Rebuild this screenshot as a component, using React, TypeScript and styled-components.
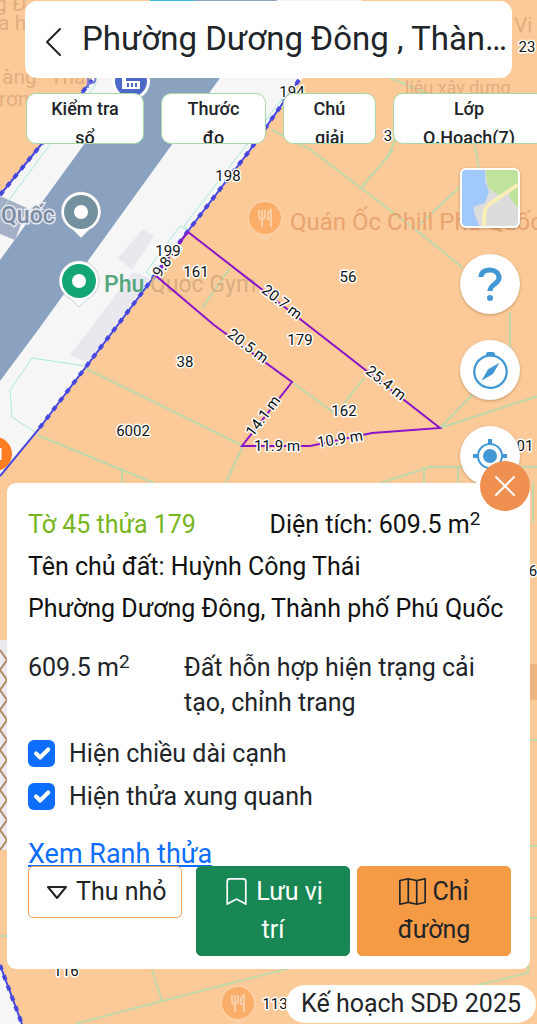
import React from "react";
import styled, { createGlobalStyle } from "styled-components";
import { BsBookmark, BsCompass, BsMap } from "react-icons/bs";

const GlobalStyle = createGlobalStyle`
  *, *::before, *::after { box-sizing: border-box; }
  body {
    margin: 0;
    background: #fcca98;
    color: #212529;
    font-family: Roboto, "Noto Sans", sans-serif;
    font-size: 25px;
  }
  button { font-family: inherit; color: inherit; cursor: pointer; }
`;

const Screen = styled.main`
  position: relative;
  display: flex;
  flex-direction: column;
  min-height: 100vh;
  overflow: hidden;
`;

const MapCanvas = styled.svg`
  position: absolute;
  inset: 0;
  width: 100%;
  height: 100%;
  z-index: -1;
`;

const Header = styled.header`
  display: flex;
  align-items: center;
  gap: 20px;
  height: 77px;
  margin: 1px 25px 15px;
  padding: 0 2px 0 20px;
  border-radius: 12px;
  background: #fff;
`;

const BackButton = styled.button`
  display: flex;
  flex: none;
  padding: 4px 0 0;
  border: 0;
  background: none;
`;

const Title = styled.h1`
  flex: 1;
  min-width: 0;
  margin: 0 0 2px;
  overflow: hidden;
  font-size: 33px;
  font-weight: 400;
  line-height: 48px;
  text-overflow: ellipsis;
  white-space: nowrap;
`;

const Toolbar = styled.nav`
  display: flex;
  gap: 17px;
  padding-left: 26px;
  overflow: hidden;
`;

const ToolButton = styled.button<{ $width: number }>`
  display: flex;
  flex: none;
  align-items: flex-start;
  justify-content: center;
  width: ${(p) => p.$width}px;
  height: 51px;
  padding: 0 20px;
  overflow: hidden;
  border: 1px solid #a6d9a5;
  border-radius: 10px;
  background: #fff;
  font-size: 18px;
  font-weight: 500;
  line-height: 29px;
  text-align: center;
`;

const Controls = styled.div`
  display: flex;
  flex: 1;
  flex-direction: column;
  align-items: flex-end;
  gap: 26px;
  padding: 24px 17px 0 0;
`;

const RoundButton = styled.button`
  display: flex;
  align-items: center;
  justify-content: center;
  width: 60px;
  height: 60px;
  padding: 0;
  border: 0;
  border-radius: 50%;
  background: #fff;
  box-shadow: 0 1px 3px rgba(90, 60, 20, 0.35);
  color: #4298d4;
`;

const LayerButton = styled(RoundButton)`
  overflow: hidden;
  border: 2px solid #fff;
  border-radius: 6px;
`;

const Sheet = styled.section`
  position: relative;
  margin: -4px 7px 16px;
  padding: 21px 19px 13px 21px;
  border-radius: 9px;
  background: #fff;
`;

const CloseButton = styled.button`
  position: absolute;
  top: -22px;
  right: 0;
  display: flex;
  align-items: center;
  justify-content: center;
  width: 50px;
  height: 50px;
  padding: 0;
  border: 0;
  border-radius: 50%;
  background: #f09050;
`;

const Line = styled.p`
  display: flex;
  margin: 0;
  color: #111;
  line-height: 42px;
  white-space: nowrap;
`;

const ParcelName = styled.strong`
  flex: 0 0 50%;
  color: #76b51b;
  font-weight: 400;
`;

const Sup = styled.sup`
  font-size: 19px;
  line-height: 0;
  vertical-align: 8px;
`;

const LandUse = styled.dl`
  display: flex;
  margin: 20px 0 12px;
  line-height: 35px;
`;

const LandArea = styled.dt`
  flex: 0 0 156px;
`;

const LandKind = styled.dd`
  margin: 0;
`;

const Option = styled.label`
  display: flex;
  align-items: center;
  gap: 14px;
  line-height: 43px;
`;

const Tick = styled.input`
  appearance: none;
  width: 27px;
  height: 27px;
  margin: 0;
  border-radius: 6px;
  &:checked {
    background: #0d6efd
      url("data:image/svg+xml,%3Csvg xmlns='http://www.w3.org/2000/svg' viewBox='0 0 20 20'%3E%3Cpath fill='none' stroke='%23fff' stroke-linecap='round' stroke-linejoin='round' stroke-width='3' d='m6 10 3 3 6-6'/%3E%3C/svg%3E");
  }
`;

const BoundaryLink = styled.a`
  display: block;
  width: fit-content;
  margin-top: 24px;
  color: #0d6efd;
  font-size: 27px;
  line-height: 24px;
`;

const Actions = styled.div`
  position: relative;
  display: flex;
  align-items: flex-start;
  gap: 7px;
`;

const ActionButton = styled.button<{ $fill: string; $line: string; $ink: string }>`
  flex: 1;
  padding: 6px 14px;
  border: 1px solid ${(p) => p.$line};
  border-radius: 5px;
  background: ${(p) => p.$fill};
  color: ${(p) => p.$ink};
  font-size: 25px;
  line-height: 38px;
  svg { vertical-align: -5px; }
`;

const CollapseButton = styled(ActionButton)`
  margin-right: 7px;
  padding: 6px 12px 6px 16px;
  white-space: nowrap;
  svg {
    margin-right: 3px;
    vertical-align: 0;
  }
`;

const PlanButton = styled.button`
  align-self: flex-end;
  margin-right: 1px;
  margin-bottom: 1px;
  padding: 0 15px;
  border: 0;
  border-radius: 19px;
  background: #fff;
  font-size: 25px;
  line-height: 38px;
`;

type Label = { x: number; y: number; text: string; turn?: number };

const parcels: Label[] = [
  { x: 292, y: 97, text: "194" },
  { x: 228, y: 181, text: "198" },
  { x: 196, y: 277, text: "161" },
  { x: 348, y: 282, text: "56" },
  { x: 300, y: 345, text: "179" },
  { x: 185, y: 367, text: "38" },
  { x: 344, y: 416, text: "162" },
  { x: 133, y: 436, text: "6002" },
  { x: 527, y: 52, text: "23" },
  { x: 388, y: 141, text: "3" },
  { x: 525, y: 451, text: "01" },
  { x: 533, y: 576, text: "6" },
  { x: 66, y: 976, text: "116" },
  { x: 275, y: 1009, text: "113" },
];

const edges: Label[] = [
  { x: 167, y: 260, text: "9.8 m", turn: -54 },
  { x: 282, y: 302, text: "20.7 m", turn: 38 },
  { x: 248, y: 346, text: "20.5 m", turn: 37 },
  { x: 386, y: 383, text: "25.4 m", turn: 38 },
  { x: 263, y: 416, text: "14.1 m", turn: -53 },
  { x: 277, y: 446, text: "11.9 m" },
  { x: 340, y: 439, text: "10.9 m", turn: -9 },
];

function ParcelMap() {
  return (
    <MapCanvas viewBox="0 0 537 1024" preserveAspectRatio="xMidYMid slice" aria-label="Bản đồ thửa đất">
      <rect width="537" height="1024" fill="#fcca98" />
      <path d="M0 195 36 151 98 70 150 0H362L300 82 250 150 188 231 120 322 38 430 0 476Z" fill="#f6f6f7" />
      <path d="M0 260 80 150 132 78 189 0H277L220 78 168 150 38 330 0 381Z" fill="#8aa1c0" />
      <path d="M0 196 27 208 15 240 0 234Z" fill="#a5b0c6" />
      <path d="m143 229 11 7-22 34-14-12Z" fill="#e9e8ef" />
      <path d="m133 272 17 6-62 85-18-8Z" fill="#e9e8ef" />
      <path d="M0 965 22 1024H0Z" fill="#f6f6f7" />
      <path d="M150 0h44v2h-44Z" fill="#3cb6e4" />
      <g fill="none" stroke="#a9e8dc" strokeWidth="1">
        <path d="m46 150 50-66M0 212l46-62M292 86l-108 140 4 4-8-4-34 46 14 10M85 366 32 358 10 390 12 417 38 434" />
      </g>
      <g fill="none" stroke="#b2dcae" strokeWidth="2" opacity=".8">
        <path d="M85 368 243 446 226 482M37 435l117 48M122 468v15M272 130l39 20 50 38 50 38 52 42M393 150l-32 38M418 226l45-42M390 78l147 60M440 428l98-32M440 428l35-36M292 382l44 32 28-36M202 308l28-40M510 312v36M380 483l50-16h107M424 467v16M458 467v16M386 160l12-26M475 145l4 24" />
        <path d="m0 695 7 2M0 936H7M152 970l10 31L75 1024M162 1001 290 968M478 985 528 973V955M530 740h7M530 846h7M530 918h7M533 483v40" />
      </g>
      <g fill="none" stroke="#4547df">
        <path d="M0 195 36 151 92 80M299 80 250 150 188 231 156 274 120 322 38 430 0 476M0 965 22 1024" strokeWidth="2" />
        <path d="M0 195 36 151 92 80M299 80 250 150 188 231 156 274 120 322 38 430M0 965 22 1024" strokeWidth="4" strokeDasharray="5 6" />
      </g>
      <path d="M0 640h7v210H0Z" fill="#e9e9ee" />
      <path d="m0 650 7 10-7 10 7 10-7 10 7 10-7 10 7 10-7 10 7 10-7 10 7 10-7 10 7 10-7 10 7 10-7 10 7 10-7 10 7 10-7 10" fill="none" stroke="#b08a66" strokeWidth="2" />
      <path d="M530 664h7v36h-7Z" fill="#efb580" />
      <g>
        <g fill="#e2ad80" fontSize="21">
          <text x="-5" y="11">g Đ</text>
          <text x="-2" y="30">a hà</text>
          <text x="2" y="84">àng</text>
          <text x="50" y="84">Thá<tspan fill="#7480d2">p</tspan></text>
          <text x="-1" y="106">rơng</text>
          <text x="514" y="32">Vi</text>
          <text x="405" y="94" fontSize="18">liệu xây dựng</text>
          <text x="290" y="230" fontSize="24" fill="#e9a470">Quán Ốc Chill Phú Quốc</text>
        </g>
        <text x="1" y="223" fontSize="23" fontWeight="500" fill="#7c8ba1" stroke="#e3e7ef" strokeWidth="3" paintOrder="stroke">Quốc</text>
        <text x="104" y="292" fontSize="23" fontWeight="500" fill="#55a67d">Phu <tspan fontWeight="400" fill="#d8ae80">Quoc Gym</tspan></text>
      </g>
      <circle cx="131" cy="81" r="19" fill="#fff" />
      <circle cx="131" cy="81" r="16" fill="#4d69c8" />
      <path d="M122 76h4v5h14v8h-18Z" fill="#fff" />
      <path d="M128 83v4m4-4v4m4-4v4" stroke="#4d69c8" strokeWidth="2" />
      {[{ x: 81, y: 212, c: "#73909f" }, { x: 79, y: 281, c: "#13a674" }].map((pin) => (
        <g key={pin.y} transform={`translate(${pin.x} ${pin.y})`}>
          <path d="M0 26-8 18A20 20 0 1 1 8 18Z" fill="#fff" stroke="#9aa4b4" strokeOpacity=".5" />
          <circle r="17" fill={pin.c} />
          <circle r="7" fill="#fff" />
        </g>
      ))}
      {[{ x: 265, y: 218 }, { x: 238, y: 1003 }].map((spot) => (
        <g key={spot.y} transform={`translate(${spot.x} ${spot.y})`}>
          <path d="M0 24-8 16A18 18 0 1 1 8 16Z" fill="#fccfa4" />
          <circle r="16" fill="#fbae69" />
          <path d="M-6-8v6q0 3 3 3t3-3v-6M-3-8V9M6 9V-8q-4 2-3 9h3" fill="none" stroke="#fbd0a8" strokeWidth="2" />
        </g>
      ))}
      <circle cx="-5" cy="454" r="17" fill="#ff7d22" />
      <path d="M0 448v12" stroke="#fff" strokeWidth="3" />
      <path d="M188 232 440 428 372 433 310 446H242L292 382 214 325 155 275Z" fill="none" stroke="#8b15c9" strokeWidth="2" />
      <g fill="#111" stroke="#fff" strokeWidth="3" strokeLinejoin="round" paintOrder="stroke" fontSize="15" textAnchor="middle">
        {edges.map((l) => (
          <text key={l.text} transform={`translate(${l.x} ${l.y}) rotate(${l.turn ?? 0})`} y="5">{l.text}</text>
        ))}
        <text x="168" y="256">199</text>
        {parcels.map((l) => (
          <text key={l.text} x={l.x} y={l.y}>{l.text}</text>
        ))}
      </g>
    </MapCanvas>
  );
}

function LayerPreview() {
  return (
    <svg width="58" height="58" viewBox="0 0 58 58" aria-hidden="true">
      <rect width="58" height="58" fill="#dcdcdc" />
      <path d="M0 0H24V12L28 22 24 34 12 38 13 46 18 58H0Z" fill="#a2c9fb" />
      <path d="M24 0H58V40L49 28 50 20 38 26 27 18Z" fill="#bfe39c" />
      <path d="M23 58V46Q23 38 32 33L58 15" fill="none" stroke="#fbefb4" strokeWidth="4" />
    </svg>
  );
}

function QuestionIcon() {
  return (
    <svg width="24" height="36" viewBox="0 0 24 36" fill="none" aria-hidden="true">
      <path d="M3 11C3 6 7 4 12 4s9 3 9 8c0 6-9 6-9 13" stroke="currentColor" strokeWidth="5" />
      <circle cx="12" cy="32" r="3" fill="currentColor" />
    </svg>
  );
}

function LocateIcon() {
  return (
    <svg width="34" height="34" viewBox="0 0 34 34" fill="none" stroke="currentColor" aria-hidden="true">
      <circle cx="17" cy="17" r="12" strokeWidth="2" />
      <circle cx="17" cy="17" r="7" fill="currentColor" stroke="none" />
      <path d="M17 0v6m0 22v6M0 17h6m22 0h6" strokeWidth="4" />
    </svg>
  );
}

export default function App() {
  return (
    <Screen>
      <GlobalStyle />
      <ParcelMap />
      <Header>
        <BackButton aria-label="Quay lại">
          <svg width="17" height="30" viewBox="0 0 17 30" fill="none" stroke="currentColor" strokeWidth="2" strokeLinecap="round" strokeLinejoin="round" aria-hidden="true">
            <path d="M15 2 2 15 15 28" />
          </svg>
        </BackButton>
        <Title>Phường Dương Đông , Thành phố Phú Quốc</Title>
      </Header>
      <Toolbar>
        <ToolButton $width={118}>Kiểm tra sổ</ToolButton>
        <ToolButton $width={105}>Thước đo</ToolButton>
        <ToolButton $width={93}>Chú giải</ToolButton>
        <ToolButton $width={152}>Lớp Q.Hoạch(7)</ToolButton>
      </Toolbar>
      <Controls>
        <LayerButton aria-label="Lớp bản đồ"><LayerPreview /></LayerButton>
        <RoundButton aria-label="Trợ giúp"><QuestionIcon /></RoundButton>
        <RoundButton aria-label="La bàn"><BsCompass size={37} /></RoundButton>
        <RoundButton aria-label="Vị trí của tôi"><LocateIcon /></RoundButton>
      </Controls>
      <Sheet>
        <CloseButton aria-label="Đóng">
          <svg width="20" height="20" viewBox="0 0 20 20" fill="none" stroke="#fff" strokeWidth="2" strokeLinecap="round" aria-hidden="true">
            <path d="m1 1 18 18M19 1 1 19" />
          </svg>
        </CloseButton>
        <Line>
          <ParcelName>Tờ 45 thửa 179</ParcelName>
          <span>Diện tích: 609.5 m<Sup>2</Sup></span>
        </Line>
        <Line>Tên chủ đất: Huỳnh Công Thái</Line>
        <Line>Phường Dương Đông, Thành phố Phú Quốc</Line>
        <LandUse>
          <LandArea>609.5 m<Sup>2</Sup></LandArea>
          <LandKind>Đất hỗn hợp hiện trạng cải tạo, chỉnh trang</LandKind>
        </LandUse>
        <Option><Tick type="checkbox" defaultChecked />Hiện chiều dài cạnh</Option>
        <Option><Tick type="checkbox" defaultChecked />Hiện thửa xung quanh</Option>
        <BoundaryLink href="#ranh-thua">Xem Ranh thửa</BoundaryLink>
        <Actions>
          <CollapseButton $fill="#fff" $line="#f5a45c" $ink="#212529">
            <svg width="20" height="14" viewBox="0 0 20 14" fill="none" stroke="currentColor" strokeWidth="2" strokeLinejoin="round" aria-hidden="true">
              <path d="M1 1H19L10 12Z" />
            </svg>{" "}
            Thu nhỏ
          </CollapseButton>
          <ActionButton $fill="#198754" $line="#198754" $ink="#fff"><BsBookmark size={27} /> Lưu vị trí</ActionButton>
          <ActionButton $fill="#f59a45" $line="#f59a45" $ink="#212529"><BsMap size={27} /> Chỉ đường</ActionButton>
        </Actions>
      </Sheet>
      <PlanButton>Kế hoạch SDĐ 2025</PlanButton>
    </Screen>
  );
}
